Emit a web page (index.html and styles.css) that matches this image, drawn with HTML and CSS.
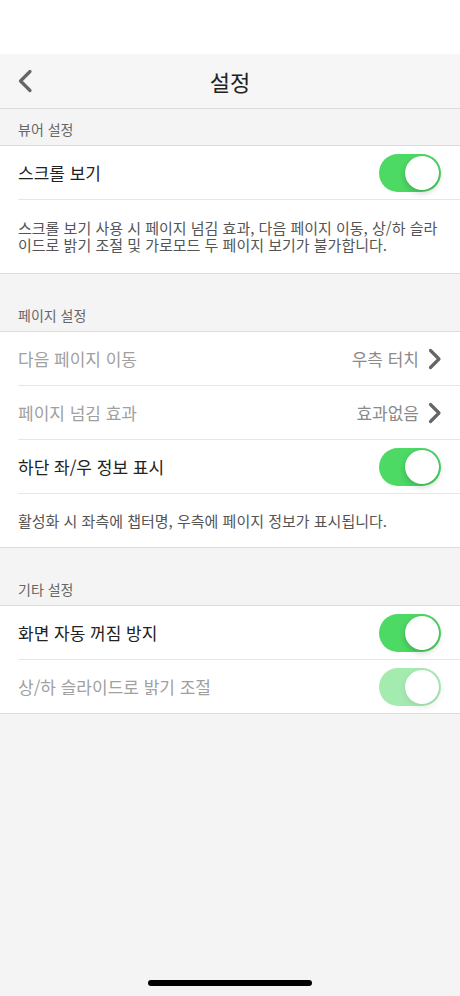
FILE: index.html
```html
<!DOCTYPE html>
<html lang="ko">
<head>
  <meta charset="UTF-8" />
  <meta name="viewport" content="width=device-width, initial-scale=1.0"/>
  <title>설정</title>
  <link rel="stylesheet" href="styles.css">
</head>
<body>

  <div class="status-bar"></div>

  <!-- 상단 네비게이션 -->
  <header class="nav-bar">
    <button class="back-button" aria-label="뒤로">
      <svg width="16" height="24" viewBox="0 0 16 24"><path d="M13 2.5 L3.5 12 L13 21.5" fill="none" stroke="#666" stroke-width="3.2" stroke-linecap="round" stroke-linejoin="round"/></svg>
    </button>
    <h1>설정</h1>
  </header>

  <!-- 뷰어 설정 -->
  <div class="section-header first">뷰어 설정</div>
  <div class="group">
    <div class="row">
      <span class="label">스크롤 보기</span>
      <span class="toggle on"><span class="knob"></span></span>
    </div>
    <p class="description">스크롤 보기 사용 시 페이지 넘김 효과, 다음 페이지 이동, 상/하 슬라이드로 밝기 조절 및 가로모드 두 페이지 보기가 불가합니다.</p>
  </div>

  <!-- 페이지 설정 -->
  <div class="section-header">페이지 설정</div>
  <div class="group">
    <div class="row">
      <span class="label disabled">다음 페이지 이동</span>
      <span class="value">우측 터치<svg class="chevron" width="16" height="22" viewBox="0 0 16 22"><path d="M3.5 2.5 L12 11 L3.5 19.5" fill="none" stroke="#666" stroke-width="3.2" stroke-linecap="round" stroke-linejoin="round"/></svg></span>
    </div>
    <div class="row">
      <span class="label disabled">페이지 넘김 효과</span>
      <span class="value">효과없음<svg class="chevron" width="16" height="22" viewBox="0 0 16 22"><path d="M3.5 2.5 L12 11 L3.5 19.5" fill="none" stroke="#666" stroke-width="3.2" stroke-linecap="round" stroke-linejoin="round"/></svg></span>
    </div>
    <div class="row">
      <span class="label">하단 좌/우 정보 표시</span>
      <span class="toggle on"><span class="knob"></span></span>
    </div>
    <p class="description short">활성화 시 좌측에 챕터명, 우측에 페이지 정보가 표시됩니다.</p>
  </div>

  <!-- 기타 설정 -->
  <div class="section-header">기타 설정</div>
  <div class="group">
    <div class="row">
      <span class="label">화면 자동 꺼짐 방지</span>
      <span class="toggle on"><span class="knob"></span></span>
    </div>
    <div class="row last">
      <span class="label disabled">상/하 슬라이드로 밝기 조절</span>
      <span class="toggle on faded"><span class="knob"></span></span>
    </div>
  </div>

  <div class="home-indicator"></div>

</body>
</html>
```

FILE: styles.css
```css
body {
  margin: 0;
  min-height: 100vh;
  display: flex;
  flex-direction: column;
  background-color: #f4f4f4;
  color: #222;
  font-family: 'Noto Sans CJK KR', 'Noto Sans', sans-serif;
}

.status-bar {
  height: 54px;
  background-color: #fff;
}

.nav-bar {
  height: 54px;
  display: flex;
  align-items: center;
  justify-content: center;
  position: relative;
  background-color: #f6f6f6;
  border-bottom: 1px solid #dcdcdc;
}

.nav-bar h1 {
  margin: 0;
  font-size: 22px;
  font-weight: 400;
  color: #222;
}

.back-button {
  position: absolute;
  left: 17px;
  top: 15px;
  padding: 0;
  border: none;
  background: none;
  cursor: pointer;
}

.back-button svg {
  display: block;
}

.section-header {
  height: 37px;
  margin-top: 21px;
  padding: 0 18px;
  display: flex;
  align-items: center;
  padding-top: 3px;
  box-sizing: border-box;
  font-size: 14px;
  color: #666;
  border-bottom: 1px solid #dcdcdc;
}

.section-header.first {
  margin-top: 0;
}

.group {
  background-color: #fff;
  border-bottom: 1px solid #dcdcdc;
}

.row {
  height: 53px;
  margin-left: 18px;
  padding-right: 19px;
  display: flex;
  align-items: center;
  justify-content: space-between;
  border-bottom: 1px solid #e6e6e6;
}

.row.last {
  border-bottom: none;
}

.label {
  font-size: 17px;
  color: #222;
}

.label.disabled {
  color: #a0a0a0;
}

.value {
  display: flex;
  align-items: center;
  gap: 8px;
  font-size: 17px;
  color: #8a8a8a;
}

.chevron {
  display: block;
  margin-right: -2px;
}

.toggle {
  width: 62px;
  height: 38px;
  border-radius: 19px;
  background-color: #e5e5e5;
  position: relative;
  box-sizing: border-box;
}

.toggle.on {
  background-color: #4cd964;
}

.toggle.faded {
  opacity: 0.5;
}

.toggle .knob {
  position: absolute;
  top: 2px;
  left: 2px;
  width: 34px;
  height: 34px;
  border-radius: 50%;
  background-color: #fff;
  box-shadow: 0 3px 6px rgba(0, 0, 0, 0.18), 0 0 1px rgba(0, 0, 0, 0.2);
}

.toggle.on .knob {
  left: 26px;
}

.description {
  margin: 0;
  padding: 19px 18px 20px;
  font-size: 15px;
  line-height: 17px;
  color: #555;
}

.description.short {
  padding: 18px 18px 18px;
}

.home-indicator {
  margin: auto auto 10px;
  width: 164px;
  height: 6px;
  border-radius: 3px;
  background-color: #000;
}
```
